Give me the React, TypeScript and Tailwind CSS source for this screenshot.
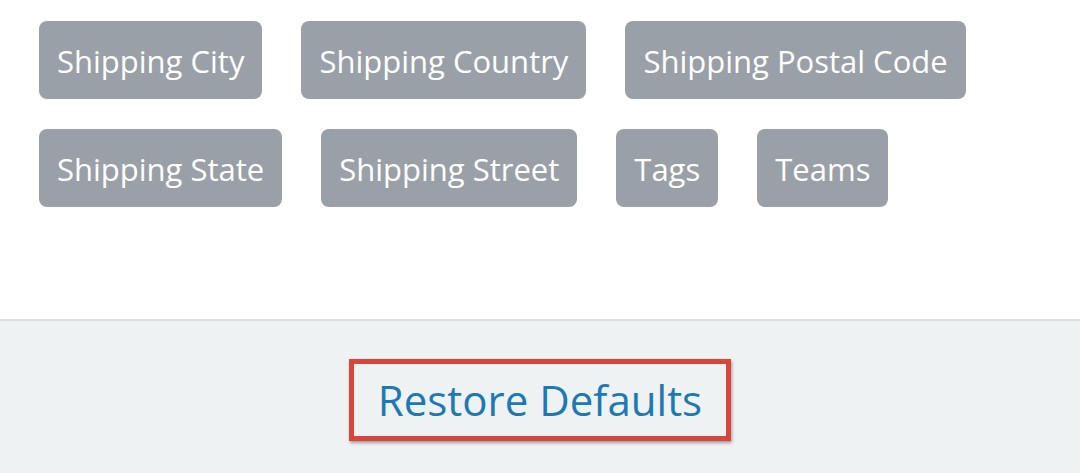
const fields = [
  "Shipping City",
  "Shipping Country",
  "Shipping Postal Code",
  "Shipping State",
  "Shipping Street",
  "Tags",
  "Teams",
];

function App() {
  return (
    <div className="flex h-[473px] w-[1080px] flex-col overflow-hidden bg-white font-['Open_Sans',sans-serif]">
      <div className="flex h-[319px] flex-wrap content-start gap-x-[39px] gap-y-[30px] px-[39px] pt-[21px] pr-[80px]">
        {fields.map((field) => (
          <span
            key={field}
            className="flex h-[78px] items-center rounded-[8px] bg-[#9aa0a8] px-[18px] pt-[2px] text-[31px] text-white"
          >
            {field}
          </span>
        ))}
      </div>

      <div className="flex flex-1 justify-center border-t-2 border-[#dcdfe2] bg-[#eff2f3] pt-[38px]">
        <div className="h-[82px] border-[5px] border-[#d8453a] px-[24px] shadow-[1px_2px_3px_rgba(0,0,0,0.35)]">
          <button className="flex h-full items-center text-[42px] leading-none text-[#1c79b4]">
            Restore Defaults
          </button>
        </div>
      </div>
    </div>
  );
}

export default App;
